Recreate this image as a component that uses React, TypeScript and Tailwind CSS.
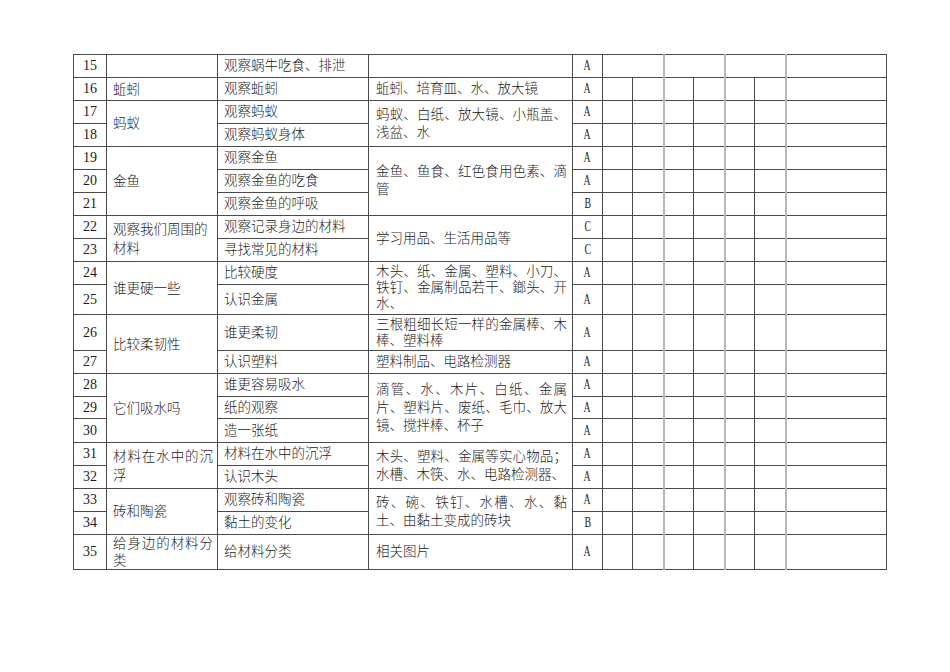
import React from 'react';

type Span = { text: string; span: number; justify?: boolean; tight?: boolean };

type Row = {
  n: number;
  h: string;
  lesson?: Span;
  act: string;
  mat?: Span;
  lvl: string;
};

const rows: Row[] = [
  { n: 15, h: 'h-[23px]', lesson: { text: '', span: 1 }, act: '观察蜗牛吃食、排泄', mat: { text: '', span: 1 }, lvl: 'A' },
  { n: 16, h: 'h-[23px]', lesson: { text: '蚯蚓', span: 1 }, act: '观察蚯蚓', mat: { text: '蚯蚓、培育皿、水、放大镜', span: 1 }, lvl: 'A' },
  { n: 17, h: 'h-[23px]', lesson: { text: '蚂蚁', span: 2 }, act: '观察蚂蚁', mat: { text: '蚂蚁、白纸、放大镜、小瓶盖、浅盆、水', span: 2 }, lvl: 'A' },
  { n: 18, h: 'h-[23px]', act: '观察蚂蚁身体', lvl: 'A' },
  { n: 19, h: 'h-[23px]', lesson: { text: '金鱼', span: 3 }, act: '观察金鱼', mat: { text: '金鱼、鱼食、红色食用色素、滴管', span: 3 }, lvl: 'A' },
  { n: 20, h: 'h-[23px]', act: '观察金鱼的吃食', lvl: 'A' },
  { n: 21, h: 'h-[23px]', act: '观察金鱼的呼吸', lvl: 'B' },
  { n: 22, h: 'h-[23px]', lesson: { text: '观察我们周围的材料', span: 2 }, act: '观察记录身边的材料', mat: { text: '学习用品、生活用品等', span: 2 }, lvl: 'C' },
  { n: 23, h: 'h-[23px]', act: '寻找常见的材料', lvl: 'C' },
  { n: 24, h: 'h-[23px]', lesson: { text: '谁更硬一些', span: 2 }, act: '比较硬度', mat: { text: '木头、纸、金属、塑料、小刀、铁钉、金属制品若干、鎯头、开水、', span: 2, tight: true }, lvl: 'A' },
  { n: 25, h: 'h-[30px]', act: '认识金属', lvl: 'A' },
  { n: 26, h: 'h-[36px]', lesson: { text: '比较柔韧性', span: 2 }, act: '谁更柔韧', mat: { text: '三根粗细长短一样的金属棒、木棒、塑料棒', span: 1, tight: true }, lvl: 'A' },
  { n: 27, h: 'h-[23px]', act: '认识塑料', mat: { text: '塑料制品、电路检测器', span: 1 }, lvl: 'A' },
  { n: 28, h: 'h-[23px]', lesson: { text: '它们吸水吗', span: 3 }, act: '谁更容易吸水', mat: { text: '滴管、水、木片、白纸、金属片、塑料片、废纸、毛巾、放大镜、搅拌棒、杯子', span: 3 }, lvl: 'A' },
  { n: 29, h: 'h-[22px]', act: '纸的观察', lvl: 'A' },
  { n: 30, h: 'h-[24px]', act: '造一张纸', lvl: 'A' },
  { n: 31, h: 'h-[23px]', lesson: { text: '材料在水中的沉浮', span: 2, justify: true }, act: '材料在水中的沉浮', mat: { text: '木头、塑料、金属等实心物品；水槽、木筷、水、电路检测器、', span: 2 }, lvl: 'A' },
  { n: 32, h: 'h-[23px]', act: '认识木头', lvl: 'A' },
  { n: 33, h: 'h-[23px]', lesson: { text: '砖和陶瓷', span: 2 }, act: '观察砖和陶瓷', mat: { text: '砖、碗、铁钉、水槽、水、黏土、由黏土变成的砖块', span: 2 }, lvl: 'A' },
  { n: 34, h: 'h-[23px]', act: '黏土的变化', lvl: 'B' },
  { n: 35, h: 'h-[33px]', lesson: { text: '给身边的材料分类', span: 1, justify: true, tight: true }, act: '给材料分类', mat: { text: '相关图片', span: 1 }, lvl: 'A' },
];

const line = 'border border-[#4a4a4a]';
const gray = 'border-l-2 border-l-[#b8b8b8]';

function EmptyCells({ merged }: { merged: boolean }) {
  if (merged) {
    return (
      <>
        <td colSpan={2} className={line}></td>
        <td colSpan={2} className={`${line} ${gray}`}></td>
        <td colSpan={2} className={`${line} ${gray}`}></td>
        <td className={`${line} ${gray}`}></td>
      </>
    );
  }
  return (
    <>
      <td className={line}></td>
      <td className={line}></td>
      <td className={`${line} ${gray}`}></td>
      <td className={line}></td>
      <td className={`${line} ${gray}`}></td>
      <td className={line}></td>
      <td className={`${line} ${gray}`}></td>
    </>
  );
}

export default function App() {
  return (
    <div
      className="min-h-[672px] bg-white pt-[54px] pl-[73px] text-[#1c1c1c]"
      style={{ fontFamily: '"Liberation Serif", "Noto Sans CJK SC", serif' }}
    >
      <table className="table-fixed border-collapse w-[813px] text-[13.5px] font-light">
        <colgroup>
          <col className="w-[33px]" />
          <col className="w-[111px]" />
          <col className="w-[151px]" />
          <col className="w-[204px]" />
          <col className="w-[30px]" />
          <col className="w-[30px]" />
          <col className="w-[31px]" />
          <col className="w-[30px]" />
          <col className="w-[31px]" />
          <col className="w-[30px]" />
          <col className="w-[31px]" />
          <col className="w-[101px]" />
        </colgroup>
        <tbody>
          {rows.map((r) => (
            <tr key={r.n} className={r.h}>
              <td className={`${line} text-center text-[14px] font-normal leading-none p-0`}>{r.n}</td>
              {r.lesson && (
                <td
                  rowSpan={r.lesson.span}
                  className={`${line} pl-[6px] pr-[4px] py-0 ${r.lesson.tight ? 'leading-[17px]' : 'leading-[19px]'} ${r.lesson.justify ? 'text-justify' : 'text-left'}`}
                >
                  {r.lesson.text}
                </td>
              )}
              <td className={`${line} pl-[6px] pr-[2px] py-0 leading-none whitespace-nowrap`}>{r.act}</td>
              {r.mat && (
                <td
                  rowSpan={r.mat.span}
                  className={`${line} pl-[7px] pr-[5px] py-0 text-justify ${r.mat.tight ? 'leading-[16px]' : 'leading-[18px]'}`}
                >
                  {r.mat.text}
                </td>
              )}
              <td className={`${line} text-center p-0 leading-none`}>
                <span className="inline-block scale-x-[0.7] text-[14px] font-normal">{r.lvl}</span>
              </td>
              <EmptyCells merged={r.n === 15} />
            </tr>
          ))}
        </tbody>
      </table>
    </div>
  );
}
